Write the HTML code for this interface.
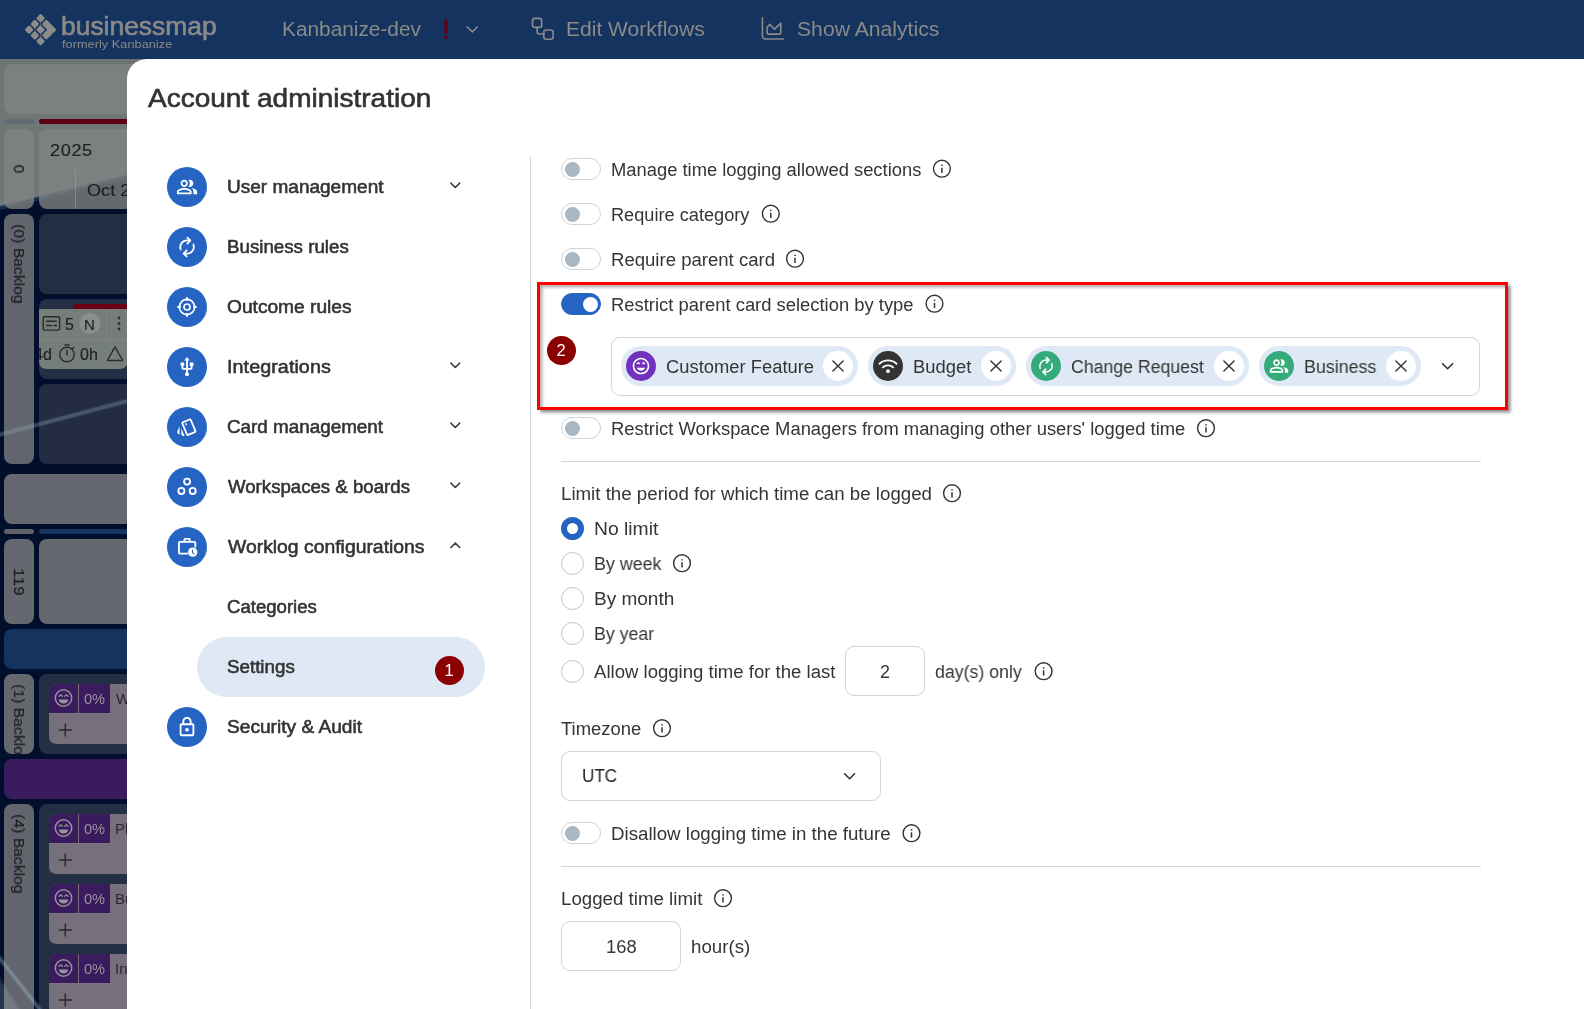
<!DOCTYPE html>
<html lang="en">
<head>
<meta charset="utf-8">
<title>Account administration</title>
<style>
html,body{margin:0;padding:0}
body{width:1584px;height:1009px;overflow:hidden;position:relative;background:#fff;font-family:"Liberation Sans",sans-serif}
.t{position:absolute;will-change:transform;white-space:nowrap;font-family:"Liberation Sans",sans-serif}
.abs{position:absolute}
#hdr{position:absolute;left:0;top:0;width:1584px;height:59px;background:#14335f}
#board{position:absolute;left:0;top:59px;width:160px;height:950px;background:#020f2c;overflow:hidden}
#modal{position:absolute;left:127px;top:59px;width:1457px;height:950px;background:#fff;border-top-left-radius:20px}
.bx{position:absolute;border-radius:8px}
.ic{position:absolute;width:40px;height:40px;border-radius:50%;background:#2664c3;left:167px}
.ic svg{position:absolute;left:9px;top:8.5px;width:22px;height:22px;fill:#fff}
.chev{position:absolute;width:12px;height:8px}
.tg{position:absolute;left:561px;width:40px;height:22px;border-radius:11px;box-sizing:border-box;border:1px solid #ccd5dc;background:#fff}
.tg i{position:absolute;left:2.6px;top:2.7px;width:15px;height:15px;border-radius:50%;background:#a8b7c1}
.tg.on{background:#2664c3;border-color:#2664c3}
.tg.on i{left:20.6px;background:#fff}
.info{position:absolute;width:20px;height:20px}
.rd{position:absolute;left:561px;width:23px;height:23px;border-radius:50%;box-sizing:border-box;border:1px solid #b9c6cf;background:#fff}
.rd.on{border:6.6px solid #2664c3}
.hr{position:absolute;left:561px;width:920px;height:1px;background:#cfd8dc}
.inp{position:absolute;box-sizing:border-box;border:1px solid #ccd5dc;border-radius:9px;background:#fff}
.chip{position:absolute;top:346px;height:40px;border-radius:20px;background:#dfe8f5}
.chip .ci{position:absolute;left:5px;top:5px;width:30px;height:30px;border-radius:50%}
.chip .ci svg{position:absolute;left:5px;top:5px;width:20px;height:20px;fill:#fff}
.chip .cx{position:absolute;right:5px;top:5px;width:30px;height:30px;border-radius:50%;background:#fff}
.chip .cx svg{position:absolute;left:9px;top:9px;width:12px;height:12px}
.badge{position:absolute;width:29.6px;height:29.6px;border-radius:50%;background:#8b0000}
</style>
</head>
<body>
<!-- ===== board behind modal ===== -->
<div id="board">
<svg class="abs" style="left:0;top:0" width="160" height="950" viewBox="0 59 160 950">
 <defs>
  <linearGradient id="gtop" x1="0" y1="59" x2="0" y2="210" gradientUnits="userSpaceOnUse"><stop offset="0" stop-color="#6b736e"/><stop offset="0.12" stop-color="#6f7774"/><stop offset="1" stop-color="#6f7775"/></linearGradient>
 </defs>
 <!-- background picture: grey-green sky over dark navy -->
 <polygon points="0,59 160,59 160,166 0,205" fill="url(#gtop)"/>
 <polygon points="0,204 160,165 160,168 0,207" fill="#8fa0a8" opacity=".5"/>
 <polygon points="0,207 160,168 160,171 0,210" fill="#1e3a52" opacity=".7"/>
 <!-- row 1 -->
 <rect x="4" y="64" width="160" height="50" rx="8" fill="#808382" opacity=".78"/>
 <rect x="4" y="119" width="30" height="5" rx="2.500" fill="#626b73"/>
 <rect x="39" y="119" width="130" height="5" rx="2.500" fill="#5a0012"/>
 <rect x="4" y="129" width="30" height="80" rx="8" fill="#808382" opacity=".78"/>
 <rect x="39" y="129" width="130" height="80" rx="8" fill="#808382" opacity=".78"/>
 <path d="M39 169.500H160" stroke="#8b8e8e" stroke-width="1" fill="none" opacity=".35"/><path d="M75.500 169.500V209" stroke="#9a9d9e" stroke-width="1" fill="none" opacity=".6"/>
 <!-- (0) backlog -->
 <rect x="4" y="214" width="30" height="250" rx="8" fill="#65686f" opacity=".97"/>
 <rect x="39" y="214" width="130" height="80" rx="8" fill="#242e44" opacity=".97"/>
 <rect x="39" y="299" width="130" height="80" rx="8" fill="#242e44"/>
 <rect x="73" y="304" width="100" height="5" rx="2.500" fill="#6a0014"/>
 <path d="M39 309H127.500V361Q127.500 369 119.500 369H47Q39 369 39 361Z" fill="#767e79"/>
 <path d="M39 339.500H160M106.500 309V339.500" stroke="#7f8680" stroke-width="1" fill="none"/>
 <circle cx="90" cy="323.500" r="10.500" fill="#8a8f8c"/>
 <g fill="none" stroke="#2b2b2b" stroke-width="1.400" stroke-linejoin="round" stroke-linecap="round">
  <rect x="43.200" y="316.700" width="16.400" height="13.400" rx="1.500"/>
  <path d="M46.600 321.300H56.400M46.600 325.500H51.500M54 325.500H56.400"/>
  <circle cx="67" cy="354.500" r="7.300"/>
  <path d="M67 350.200V354.800M64.800 345H69.200M72.600 348.600L73.800 347.400"/>
  <path d="M115 346.800L122.700 360.500H107.300Z"/>
 </g>
 <g fill="#2b2b2b"><circle cx="119" cy="318" r="1.400"/><circle cx="119" cy="323.500" r="1.400"/><circle cx="119" cy="329" r="1.400"/></g>
 <rect x="39" y="384" width="130" height="80" rx="8" fill="#242e44" opacity=".96"/>
 <!-- row -->
 <rect x="4" y="474" width="160" height="50" rx="8" fill="#65686f"/>
 <rect x="4" y="529" width="30" height="5" rx="2.500" fill="#5e6268"/>
 <rect x="39" y="529" width="130" height="5" rx="2.500" fill="#17345f"/>
 <rect x="4" y="539" width="30" height="85" rx="8" fill="#65686f"/>
 <rect x="39" y="539" width="130" height="85" rx="8" fill="#65686f"/>
 <rect x="4" y="629" width="160" height="40" rx="8" fill="#14335f"/>
 <!-- (1) backlog -->
 <rect x="4" y="674" width="30" height="80" rx="8" fill="#65686f"/>
 <rect x="39" y="674" width="130" height="80" rx="8" fill="#242e44"/>
 <rect x="4" y="759" width="160" height="40" rx="8" fill="#391b5e"/>
 <!-- (4) backlog -->
 <rect x="4" y="804" width="30" height="230" rx="8" fill="#65686f" opacity=".97"/>
 <rect x="39" y="804" width="130" height="230" rx="8" fill="#242e44"/>
 <polygon points="0,432.800 160,390.800 160,394.200 0,436.200" fill="#8fb6c8" opacity=".24" style="filter:blur(.6px)"/>
 <polygon points="0,431.500 160,389.500 160,395.500 0,437.500" fill="#9fb4c4" opacity=".1"/>
 <g style="filter:blur(1px)"><path d="M-6 951L42 1012.400" stroke="#a8c8e4" stroke-width="2.600" opacity=".5" fill="none"/><path d="M-4 972L24 1016L-4 1016Z" fill="#b8c4d0" opacity=".2"/></g>
 <g>
  <path d="M57 684H160V744H57Q49 744 49 736V692Q49 684 57 684Z" fill="#76707c"/>
  <path d="M57 684H110V713H49V692Q49 684 57 684Z" fill="#391b5e"/>
  <path d="M78.500 684V713" stroke="#76707c" stroke-width="1"/><path d="M49 713.500H160" stroke="#807a86" stroke-width="1" opacity=".5"/>
  <g fill="none" stroke="#96939b" stroke-width="1.500" stroke-linecap="round">
   <circle cx="63.500" cy="698" r="8.200"/>
   <path d="M59 696.300L60.700 694.800L62.400 696.300M64.700 696.300L66.400 694.800L68.100 696.300" stroke-width="1.200"/>
  </g>
  <path d="M58.700 699.500H68.300Q67.500 703.600 63.500 703.600Q59.500 703.600 58.700 699.500Z" fill="#96939b"/>
  <path d="M65.300 723.500V736.500M58.800 730H71.800" stroke="#2b2b2b" stroke-width="1.500" fill="none"/>
 </g>
 <g transform="translate(0 130)">
  <path d="M57 684H160V744H57Q49 744 49 736V692Q49 684 57 684Z" fill="#76707c"/>
  <path d="M57 684H110V713H49V692Q49 684 57 684Z" fill="#391b5e"/>
  <path d="M78.500 684V713" stroke="#76707c" stroke-width="1"/><path d="M49 713.500H160" stroke="#807a86" stroke-width="1" opacity=".5"/>
  <g fill="none" stroke="#96939b" stroke-width="1.500" stroke-linecap="round">
   <circle cx="63.500" cy="698" r="8.200"/>
   <path d="M59 696.300L60.700 694.800L62.400 696.300M64.700 696.300L66.400 694.800L68.100 696.300" stroke-width="1.200"/>
  </g>
  <path d="M58.700 699.500H68.300Q67.500 703.600 63.500 703.600Q59.500 703.600 58.700 699.500Z" fill="#96939b"/>
  <path d="M65.300 723.500V736.500M58.800 730H71.800" stroke="#2b2b2b" stroke-width="1.500" fill="none"/>
 </g>
 <g transform="translate(0 200)">
  <path d="M57 684H160V744H57Q49 744 49 736V692Q49 684 57 684Z" fill="#76707c"/>
  <path d="M57 684H110V713H49V692Q49 684 57 684Z" fill="#391b5e"/>
  <path d="M78.500 684V713" stroke="#76707c" stroke-width="1"/><path d="M49 713.500H160" stroke="#807a86" stroke-width="1" opacity=".5"/>
  <g fill="none" stroke="#96939b" stroke-width="1.500" stroke-linecap="round">
   <circle cx="63.500" cy="698" r="8.200"/>
   <path d="M59 696.300L60.700 694.800L62.400 696.300M64.700 696.300L66.400 694.800L68.100 696.300" stroke-width="1.200"/>
  </g>
  <path d="M58.700 699.500H68.300Q67.500 703.600 63.500 703.600Q59.500 703.600 58.700 699.500Z" fill="#96939b"/>
  <path d="M65.300 723.500V736.500M58.800 730H71.800" stroke="#2b2b2b" stroke-width="1.500" fill="none"/>
 </g>
 <g transform="translate(0 270)">
  <path d="M57 684H160V744H57Q49 744 49 736V692Q49 684 57 684Z" fill="#76707c"/>
  <path d="M57 684H110V713H49V692Q49 684 57 684Z" fill="#391b5e"/>
  <path d="M78.500 684V713" stroke="#76707c" stroke-width="1"/><path d="M49 713.500H160" stroke="#807a86" stroke-width="1" opacity=".5"/>
  <g fill="none" stroke="#96939b" stroke-width="1.500" stroke-linecap="round">
   <circle cx="63.500" cy="698" r="8.200"/>
   <path d="M59 696.300L60.700 694.800L62.400 696.300M64.700 696.300L66.400 694.800L68.100 696.300" stroke-width="1.200"/>
  </g>
  <path d="M58.700 699.500H68.300Q67.500 703.600 63.500 703.600Q59.500 703.600 58.700 699.500Z" fill="#96939b"/>
  <path d="M65.300 723.500V736.500M58.800 730H71.800" stroke="#2b2b2b" stroke-width="1.500" fill="none"/>
 </g>
</svg>

</div>
<!-- ===== header ===== -->
<div id="hdr">
<svg class="abs" style="left:0;top:0" width="1000" height="59" viewBox="0 0 1000 59">
 <g fill="#8c8b8a">
  <g id="lg">
   <rect x="-3.3" y="-3.3" width="6.6" height="6.6" rx="1.5" transform="translate(29.1 29.7) rotate(45)"/>
   <rect x="-3.3" y="-3.3" width="6.6" height="6.6" rx="1.5" transform="translate(34.85 23.95) rotate(45)"/>
   <rect x="-3.3" y="-3.3" width="6.6" height="6.6" rx="1.5" transform="translate(34.85 35.45) rotate(45)"/>
   <rect x="-3.3" y="-3.3" width="6.6" height="6.6" rx="1.5" transform="translate(40.6 18.2) rotate(45)"/>
   <rect x="-3.3" y="-3.3" width="6.6" height="6.6" rx="1.5" transform="translate(40.6 29.7) rotate(45)"/>
   <rect x="-3.3" y="-3.3" width="6.6" height="6.6" rx="1.5" transform="translate(40.6 41.2) rotate(45)"/>
   <path d="M46.3 20.6 L55 29.3 Q55.4 29.7 55 30.1 L46.3 38.8 L43.2 35.7 Q42.8 35.3 43.2 34.9 L47.6 30.5 Q48.4 29.7 47.6 28.9 L43.2 24.500 Q42.8 24.1 43.2 23.7 Z" stroke="#8c8b8a" stroke-width="1.6" stroke-linejoin="round"/>
   <path d="M40.6 20V40M34.85 26V34" stroke="#8c8b8a" stroke-width="0.8" opacity=".6"/>
  </g>
 </g>
 <g fill="none" stroke="#8c8b8a" stroke-width="1.6" stroke-linecap="round" stroke-linejoin="round">
  <path d="M467.1 26.700 L472.300 31.900 L477.500 26.700" stroke-width="1.5"/>
  <rect x="532.5" y="18.4" width="9.2" height="9" rx="2.4"/>
  <rect x="543.8" y="30" width="9.3" height="9.2" rx="2.4"/>
  <path d="M537.1 27.6 V31.8 Q537.1 34 539.3 34 H543.6"/>
  <path d="M762.4 17.8 V36 Q762.4 39 765.4 39 H783.6"/>
  <path d="M767.1 27.4 L769.8 24.4 L774.5 29.2 L780.8 23.2 V32.8 Q780.8 34.1 779.5 34.1 H768.4 Q767.1 34.1 767.1 32.8 Z"/>
 </g>
</svg>

</div>
<span class="t" id="t42" style="left:49.94px;top:140px;font-size:16.5px;line-height:21px;color:#1f1f1f;letter-spacing:0.571px;-webkit-text-stroke:0.15px #1f1f1f;transform:scaleX(1.0966);transform-origin:0 50%;">2025</span>
<span class="t" id="t43" style="left:86.55px;top:180px;font-size:16.5px;line-height:21px;color:#1f1f1f;letter-spacing:0.029px;-webkit-text-stroke:0.15px #1f1f1f;transform:scaleX(1.0959);transform-origin:0 50%;">Oct 2</span>
<span class="t" id="t44" style="left:65.29px;top:314px;font-size:16px;line-height:21px;color:#1f1f1f;-webkit-text-stroke:0.15px #1f1f1f;transform-origin:0 50%;">5</span>
<span class="t" id="t45" style="left:84.28px;top:315px;font-size:15px;line-height:20px;color:#1f1f1f;-webkit-text-stroke:0.15px #1f1f1f;transform-origin:0 50%;">N</span>
<span class="t" id="t46" style="left:33.57px;top:344px;font-size:16px;line-height:21px;color:#1f1f1f;-webkit-text-stroke:0.15px #1f1f1f;transform-origin:0 50%;clip-path:inset(0 0 0 5.6px);">4d</span>
<span class="t" id="t47" style="left:80.43px;top:344px;font-size:16px;line-height:21px;color:#1f1f1f;-webkit-text-stroke:0.15px #1f1f1f;transform-origin:0 50%;">0h</span>
<span class="t" id="t48" style="left:18.8px;top:169px;font-size:15.5px;line-height:20px;color:#1f1f1f;-webkit-text-stroke:0.25px #1f1f1f;transform:translate(-50%,-50%) rotate(90deg);">0</span>
<span class="t" id="t49" style="left:18.8px;top:264px;font-size:15px;line-height:20px;color:#1f1f1f;-webkit-text-stroke:0.2px #1f1f1f;transform:translate(-50%,-50%) rotate(90deg) scaleX(1.0483);">(0) Backlog</span>
<span class="t" id="t50" style="left:18.8px;top:582.4px;font-size:15.5px;line-height:20px;color:#1f1f1f;letter-spacing:0.246px;-webkit-text-stroke:0.25px #1f1f1f;transform:translate(-50%,-50%) rotate(90deg) scaleX(1.0976);">119</span>
<span class="t" id="t51" style="left:18.8px;top:723.6px;font-size:15px;line-height:20px;color:#1f1f1f;-webkit-text-stroke:0.2px #1f1f1f;transform:translate(-50%,-50%) rotate(90deg) scaleX(1.0483);clip-path:inset(0 8.2px 0 0);">(1) Backlog</span>
<span class="t" id="t52" style="left:18.8px;top:854.3px;font-size:15px;line-height:20px;color:#1f1f1f;-webkit-text-stroke:0.2px #1f1f1f;transform:translate(-50%,-50%) rotate(90deg) scaleX(1.0483);">(4) Backlog</span>
<span class="t" id="t53" style="left:83.98px;top:690px;font-size:14px;line-height:18px;color:#97949c;transform:scaleX(1.0409);transform-origin:0 50%;">0%</span>
<span class="t" id="t54" style="left:83.98px;top:820px;font-size:14px;line-height:18px;color:#97949c;transform:scaleX(1.0409);transform-origin:0 50%;">0%</span>
<span class="t" id="t55" style="left:83.98px;top:890px;font-size:14px;line-height:18px;color:#97949c;transform:scaleX(1.0409);transform-origin:0 50%;">0%</span>
<span class="t" id="t56" style="left:83.98px;top:960px;font-size:14px;line-height:18px;color:#97949c;transform:scaleX(1.0409);transform-origin:0 50%;">0%</span>
<span class="t" id="t57" style="left:116.36px;top:689px;font-size:15px;line-height:20px;color:#2a2630;transform-origin:0 50%;">W</span>
<span class="t" id="t58" style="left:115.35px;top:819px;font-size:15px;line-height:20px;color:#2a2630;transform-origin:0 50%;">Pl</span>
<span class="t" id="t59" style="left:115.35px;top:889px;font-size:15px;line-height:20px;color:#2a2630;transform-origin:0 50%;">Bu</span>
<span class="t" id="t60" style="left:115.19px;top:959px;font-size:15px;line-height:20px;color:#2a2630;transform-origin:0 50%;">In</span>
<!-- ===== modal ===== -->
<div id="modal"></div>
<!-- sidebar icons -->
<div class="ic" style="top:167px"><svg viewBox="0 0 24 24"><path d="M16.67 13.13C18.04 14.06 19 15.32 19 17v3h4v-3c0-2.18-3.57-3.47-6.33-3.87zM15 12c2.210 0 4-1.790 4-4s-1.790-4-4-4c-.47 0-.91.1-1.330.24C14.500 5.270 15 6.580 15 8s-.5 2.730-1.330 3.760c.42.14.86.24 1.330.24zM9 12c2.210 0 4-1.790 4-4s-1.790-4-4-4-4 1.790-4 4 1.790 4 4 4zm0-6c1.100 0 2 .9 2 2s-.9 2-2 2-2-.9-2-2 .9-2 2-2zm0 7c-2.670 0-8 1.340-8 4v3h16v-3c0-2.660-5.330-4-8-4zm6 5H3v-.99C3.200 16.290 6.300 15 9 15s5.800 1.290 6 2v1z"/></svg></div>
<div class="ic" style="top:227px"><svg viewBox="0 0 24 24"><g fill="none" stroke="#fff" stroke-width="1.9" stroke-linecap="round" stroke-linejoin="round"><path d="M5 14.800A7.400 7.400 0 0 1 12 4.900H15.300"/><path d="M12.400 1.700L15.700 4.900L12.400 8.300"/><path d="M19 9.200A7.400 7.400 0 0 1 12 19.100H8.700"/><path d="M11.600 15.700L8.300 19.100L11.600 22.300"/></g></svg></div>
<div class="ic" style="top:287px"><svg viewBox="0 0 24 24" style="fill:none;stroke:#fff;stroke-width:1.8"><circle cx="12" cy="12" r="8.300"/><circle cx="12" cy="12" r="3.300"/><path d="M12 2.300v2M12 19.700v2M2.300 12h2M19.700 12h2" stroke-width="2.200" stroke-linecap="round"/></svg></div>
<div class="ic" style="top:347px"><svg viewBox="0 0 24 24"><path d="M15 7v4h1v2h-3V5h2l-3-4-3 4h2v8H8v-2.070c.7-.37 1.200-1.080 1.200-1.930 0-1.210-.99-2.200-2.200-2.200s-2.200.99-2.200 2.200c0 .85.5 1.560 1.200 1.930V13c0 1.110.89 2 2 2h3v3.050c-.71.37-1.200 1.100-1.200 1.950 0 1.220.99 2.200 2.200 2.200s2.200-.98 2.200-2.200c0-.85-.49-1.580-1.200-1.950V15h3c1.110 0 2-.89 2-2v-2h1V7h-4z"/></svg></div>
<div class="ic" style="top:407px"><svg viewBox="0 0 24 24"><path d="M2.530 19.650l1.340.56v-9.030l-2.430 5.860c-.41 1.020.08 2.190 1.090 2.610zm19.500-3.700L17.070 3.980c-.31-.75-1.040-1.210-1.810-1.230-.26 0-.53.04-.79.150L7.100 5.950c-.75.31-1.210 1.030-1.230 1.800-.01.27.04.54.15.8l4.960 11.970c.31.760 1.050 1.220 1.830 1.230.26 0 .52-.05.77-.15l7.360-3.050c1.020-.42 1.510-1.590 1.090-2.600zm-9.200 3.800L7.870 7.790l7.350-3.040h.01l4.950 11.950-7.350 3.050zM11 10c.55 0 1-.45 1-1s-.45-1-1-1-1 .45-1 1 .45 1 1 1zM5.880 19.750c0 1.100.9 2 2 2h1.450l-3.450-8.340v6.340z"/></svg></div>
<div class="ic" style="top:467px"><svg viewBox="0 0 24 24" style="fill:none;stroke:#fff;stroke-width:2"><circle cx="12.100" cy="6.100" r="3.300"/><circle cx="5.900" cy="16.300" r="3.300"/><circle cx="18.200" cy="16.300" r="3.300"/></svg></div>
<div class="ic" style="top:527px"><svg viewBox="0 0 24 24"><path fill="none" stroke="#fff" stroke-width="2" stroke-linejoin="round" d="M13 19.200H4.400Q3.200 19.200 3.200 18V7.600Q3.200 6.400 4.400 6.400H19.900Q21.100 6.400 21.100 7.600V12.600"/><path fill="none" stroke="#fff" stroke-width="2" stroke-linejoin="round" d="M9.100 6.400V4.300Q9.100 3.100 10.300 3.100H13.900Q15.100 3.100 15.100 4.300V6.400"/><circle cx="18.200" cy="17.600" r="5.050"/><path fill="none" stroke="#2664c3" stroke-width="1.100" stroke-linecap="round" stroke-linejoin="round" d="M18 15.200V17.900L19.600 19.500"/></svg></div>
<div class="ic" style="top:707px"><svg viewBox="0 0 24 24"><path d="M18 8h-1V6c0-2.760-2.240-5-5-5S7 3.240 7 6v2H6c-1.100 0-2 .9-2 2v10c0 1.100.9 2 2 2h12c1.100 0 2-.9 2-2V10c0-1.100-.9-2-2-2zM9 6c0-1.660 1.340-3 3-3s3 1.340 3 3v2H9V6zm9 14H6V10h12v10zm-6-3c1.100 0 2-.9 2-2s-.9-2-2-2-2 .9-2 2 .9 2 2 2z"/></svg></div>
<!-- sidebar chevrons -->
<svg class="abs" style="left:440px;top:170px" width="30" height="400" viewBox="0 0 30 400" fill="none" stroke="#383838" stroke-width="1.500" stroke-linecap="round" stroke-linejoin="round">
 <path d="M10.900 13.100 L15.300 17.500 L19.700 13.100"/>
 <path d="M10.900 193.100 L15.300 197.500 L19.700 193.100"/>
 <path d="M10.900 253.100 L15.300 257.500 L19.700 253.100"/>
 <path d="M10.900 313.100 L15.300 317.500 L19.700 313.100"/>
 <path d="M10.900 377.500 L15.300 373.100 L19.700 377.500"/>
</svg>
<!-- active sidebar item -->
<div class="abs" style="left:197px;top:637px;width:288px;height:60px;border-radius:30px;background:#dfe8f5"></div>
<div class="badge" style="left:434.800px;top:655.900px"></div>
<!-- vertical divider -->
<div class="abs" style="left:530px;top:157px;width:1px;height:852px;background:#cfd8dc"></div>
<!-- toggles -->
<div class="tg" style="top:158px"><i></i></div>
<div class="tg" style="top:203px"><i></i></div>
<div class="tg" style="top:248px"><i></i></div>
<div class="tg on" style="top:293px"><i></i></div>
<div class="tg" style="top:417px"><i></i></div>
<div class="tg" style="top:822px"><i></i></div>
<!-- dividers -->
<div class="hr" style="top:461px"></div>
<div class="hr" style="top:866px"></div>
<!-- radios -->
<div class="rd on" style="top:517px"></div>
<div class="rd" style="top:552px"></div>
<div class="rd" style="top:587px"></div>
<div class="rd" style="top:622px"></div>
<div class="rd" style="top:660px"></div>
<!-- inputs -->
<div class="inp" style="left:845px;top:646px;width:80px;height:50px"></div>
<div class="inp" style="left:561px;top:751px;width:320px;height:50px"></div>
<div class="inp" style="left:561px;top:921px;width:120px;height:50px"></div>
<div class="inp" style="left:611px;top:337px;width:869px;height:59px"></div>
<!-- chips -->
<div class="chip" style="left:621px;width:237px"><div class="ci" style="background:#7232bf"><svg viewBox="0 0 24 24"><path d="M11.990 2C6.470 2 2 6.470 2 12s4.470 10 9.990 10S22 17.530 22 12 17.520 2 11.990 2zM12 20c-4.420 0-8-3.580-8-8s3.580-8 8-8 8 3.580 8 8-3.580 8-8 8zm1-10.940L14.060 10.120 15.120 9.060 16.180 10.120 17.240 9.060 15.120 6.940 13 9.060zm-4.120 0L9.940 10.120 11 9.060 8.880 6.940 6.760 9.060 7.820 10.120 8.880 9.060zM12 17.500c2.330 0 4.310-1.460 5.110-3.500H6.890c.8 2.040 2.780 3.500 5.110 3.500z"/></svg></div><div class="cx"><svg viewBox="0 0 12 12" fill="none" stroke="#333" stroke-width="1.400" stroke-linecap="round"><path d="M0.900 0.900L11.100 11.100M11.100 0.900L0.900 11.100"/></svg></div></div>
<div class="chip" style="left:868px;width:148px"><div class="ci" style="background:#333"><svg viewBox="0 0 24 24" style="fill:none;stroke:#fff;stroke-width:2.100;stroke-linecap:round"><path d="M1.700 9.300C7.400 3.900 16.600 3.900 22.300 9.300"/><path d="M5.700 13.600C9.200 10.300 14.800 10.300 18.300 13.600"/><circle cx="12" cy="18.200" r="2.300" fill="#fff" stroke="none"/></svg></div><div class="cx"><svg viewBox="0 0 12 12" fill="none" stroke="#333" stroke-width="1.400" stroke-linecap="round"><path d="M0.900 0.900L11.100 11.100M11.100 0.900L0.900 11.100"/></svg></div></div>
<div class="chip" style="left:1026px;width:223px"><div class="ci" style="background:#35aa7b"><svg viewBox="0 0 24 24"><g fill="none" stroke="#fff" stroke-width="1.9" stroke-linecap="round" stroke-linejoin="round"><path d="M5 14.800A7.400 7.400 0 0 1 12 4.900H15.300"/><path d="M12.400 1.700L15.700 4.900L12.400 8.300"/><path d="M19 9.200A7.400 7.400 0 0 1 12 19.100H8.700"/><path d="M11.600 15.700L8.300 19.100L11.600 22.300"/></g></svg></div><div class="cx"><svg viewBox="0 0 12 12" fill="none" stroke="#333" stroke-width="1.400" stroke-linecap="round"><path d="M0.900 0.900L11.100 11.100M11.100 0.900L0.900 11.100"/></svg></div></div>
<div class="chip" style="left:1259px;width:162px"><div class="ci" style="background:#35aa7b"><svg viewBox="0 0 24 24"><path d="M16.670 13.130C18.040 14.060 19 15.320 19 17v3h4v-3c0-2.180-3.570-3.470-6.330-3.870zM15 12c2.210 0 4-1.790 4-4s-1.790-4-4-4c-.47 0-.91.1-1.330.24C14.500 5.270 15 6.580 15 8s-.5 2.730-1.330 3.760c.42.14.86.24 1.330.24zM9 12c2.210 0 4-1.790 4-4s-1.790-4-4-4-4 1.790-4 4 1.790 4 4 4zm0-6c1.100 0 2 .9 2 2s-.9 2-2 2-2-.9-2-2 .9-2 2-2zm0 7c-2.670 0-8 1.340-8 4v3h16v-3c0-2.660-5.330-4-8-4zm6 5H3v-.99C3.200 16.290 6.300 15 9 15s5.800 1.290 6 2v1z"/></svg></div><div class="cx"><svg viewBox="0 0 12 12" fill="none" stroke="#333" stroke-width="1.400" stroke-linecap="round"><path d="M0.900 0.900L11.100 11.100M11.100 0.900L0.900 11.100"/></svg></div></div>
<!-- select chevrons -->
<svg class="abs" style="left:1437px;top:358px" width="22" height="16" viewBox="0 0 22 16" fill="none" stroke="#333" stroke-width="1.600" stroke-linecap="round" stroke-linejoin="round"><path d="M5.600 5.800 L10.600 10.800 L15.600 5.800"/></svg>
<svg class="abs" style="left:839px;top:768px" width="22" height="16" viewBox="0 0 22 16" fill="none" stroke="#333" stroke-width="1.600" stroke-linecap="round" stroke-linejoin="round"><path d="M5.600 5.800 L10.600 10.800 L15.600 5.800"/></svg>
<!-- annotation -->
<div class="abs" style="left:537px;top:282px;width:971px;height:128px;box-sizing:border-box;border:3px solid #fd0000;box-shadow:2.500px 2.500px 3px rgba(0,0,0,.45), inset 2.500px 2.500px 3px rgba(0,0,0,.3)"></div>
<div class="badge" style="left:546.800px;top:335.900px"></div>
<svg class="abs" style="left:0;top:0;pointer-events:none" width="1584" height="1009" viewBox="0 0 1584 1009" fill="none" stroke="#333" stroke-width="1.4">
<circle cx="941.9" cy="168.7" r="8.4"/><path d="M941.9 167.8V173.1" stroke-width="1.5"/><path d="M941.9 164.7V166.1" stroke-width="1.6"/>
<circle cx="770.8" cy="213.7" r="8.4"/><path d="M770.8 212.8V218.1" stroke-width="1.5"/><path d="M770.8 209.7V211.1" stroke-width="1.6"/>
<circle cx="795" cy="258.7" r="8.4"/><path d="M795 257.8V263.1" stroke-width="1.5"/><path d="M795 254.7V256.1" stroke-width="1.6"/>
<circle cx="934.5" cy="303.7" r="8.4"/><path d="M934.5 302.8V308.1" stroke-width="1.5"/><path d="M934.5 299.7V301.1" stroke-width="1.6"/>
<circle cx="1206" cy="428.2" r="8.4"/><path d="M1206 427.3V432.6" stroke-width="1.5"/><path d="M1206 424.2V425.6" stroke-width="1.6"/>
<circle cx="952" cy="493.2" r="8.4"/><path d="M952 492.3V497.6" stroke-width="1.5"/><path d="M952 489.2V490.6" stroke-width="1.6"/>
<circle cx="682" cy="563.2" r="8.4"/><path d="M682 562.3V567.6" stroke-width="1.5"/><path d="M682 559.2V560.6" stroke-width="1.6"/>
<circle cx="1043.6" cy="671.2" r="8.4"/><path d="M1043.6 670.3V675.6" stroke-width="1.5"/><path d="M1043.6 667.2V668.6" stroke-width="1.6"/>
<circle cx="662" cy="728.2" r="8.4"/><path d="M662 727.3V732.6" stroke-width="1.5"/><path d="M662 724.2V725.6" stroke-width="1.6"/>
<circle cx="911.5" cy="833.2" r="8.4"/><path d="M911.5 832.3V837.6" stroke-width="1.5"/><path d="M911.5 829.2V830.6" stroke-width="1.6"/>
<circle cx="723" cy="898.2" r="8.4"/><path d="M723 897.3V902.6" stroke-width="1.5"/><path d="M723 894.2V895.6" stroke-width="1.6"/>
</svg>

<span class="t" id="t0" style="left:611.08px;top:159px;font-size:18px;line-height:23px;color:#353535;transform:scaleX(1.0202);transform-origin:0 50%;">Manage time logging allowed sections</span>
<span class="t" id="t1" style="left:611.29px;top:204px;font-size:18px;line-height:23px;color:#353535;transform:scaleX(1.0096);transform-origin:0 50%;">Require category</span>
<span class="t" id="t2" style="left:611.27px;top:249px;font-size:18px;line-height:23px;color:#353535;transform:scaleX(1.0311);transform-origin:0 50%;">Require parent card</span>
<span class="t" id="t3" style="left:611.27px;top:294px;font-size:18px;line-height:23px;color:#353535;transform:scaleX(1.0217);transform-origin:0 50%;">Restrict parent card selection by type</span>
<span class="t" id="t4" style="left:611.27px;top:418px;font-size:18px;line-height:23px;color:#353535;transform:scaleX(1.0212);transform-origin:0 50%;">Restrict Workspace Managers from managing other users' logged time</span>
<span class="t" id="t5" style="left:561.05px;top:483px;font-size:18px;line-height:23px;color:#353535;transform:scaleX(1.0386);transform-origin:0 50%;">Limit the period for which time can be logged</span>
<span class="t" id="t6" style="left:593.6px;top:518px;font-size:18px;line-height:23px;color:#353535;transform:scaleX(1.0724);transform-origin:0 50%;">No limit</span>
<span class="t" id="t7" style="left:593.71px;top:553px;font-size:18px;line-height:23px;color:#353535;transform:scaleX(0.9916);transform-origin:0 50%;">By week</span>
<span class="t" id="t8" style="left:593.62px;top:588px;font-size:18px;line-height:23px;color:#353535;transform:scaleX(1.0559);transform-origin:0 50%;">By month</span>
<span class="t" id="t9" style="left:593.71px;top:623px;font-size:18px;line-height:23px;color:#353535;transform:scaleX(0.9857);transform-origin:0 50%;">By year</span>
<span class="t" id="t10" style="left:593.95px;top:661px;font-size:18px;line-height:23px;color:#353535;transform:scaleX(1.0312);transform-origin:0 50%;">Allow logging time for the last</span>
<span class="t" id="t11" style="left:935.2px;top:661px;font-size:18px;line-height:23px;color:#353535;transform:scaleX(0.9855);transform-origin:0 50%;">day(s) only</span>
<span class="t" id="t12" style="left:561.27px;top:718px;font-size:18px;line-height:23px;color:#353535;transform:scaleX(1.0236);transform-origin:0 50%;">Timezone</span>
<span class="t" id="t13" style="left:582.04px;top:765px;font-size:17.5px;line-height:23px;color:#222;transform:scaleX(0.9755);transform-origin:0 50%;">UTC</span>
<span class="t" id="t14" style="left:611.25px;top:823px;font-size:18px;line-height:23px;color:#353535;transform:scaleX(1.0387);transform-origin:0 50%;">Disallow logging time in the future</span>
<span class="t" id="t15" style="left:561.06px;top:888px;font-size:18px;line-height:23px;color:#353535;transform:scaleX(1.0387);transform-origin:0 50%;">Logged time limit</span>
<span class="t" id="t16" style="left:690.68px;top:936px;font-size:18px;line-height:23px;color:#353535;transform:scaleX(1.0388);transform-origin:0 50%;">hour(s)</span>
<span class="t" id="t17" style="left:885px;top:661px;font-size:18px;line-height:23px;color:#353535;transform:translateX(-50%);">2</span>
<span class="t" id="t18" style="left:605.98px;top:936px;font-size:18px;line-height:23px;color:#353535;transform:scaleX(1.0205);transform-origin:0 50%;">168</span>
<span class="t" id="t19" style="left:665.7px;top:356px;font-size:18px;line-height:23px;color:#353535;transform:scaleX(1.0209);transform-origin:0 50%;">Customer Feature</span>
<span class="t" id="t20" style="left:913.07px;top:356px;font-size:18px;line-height:23px;color:#353535;transform:scaleX(1.0208);transform-origin:0 50%;">Budget</span>
<span class="t" id="t21" style="left:1071.4px;top:356px;font-size:18px;line-height:23px;color:#353535;transform:scaleX(0.9836);transform-origin:0 50%;">Change Request</span>
<span class="t" id="t22" style="left:1304.31px;top:356px;font-size:18px;line-height:23px;color:#353535;transform:scaleX(0.9912);transform-origin:0 50%;">Business</span>
<span class="t" id="t23" style="left:560.9px;top:340px;font-size:16.5px;line-height:21px;color:#fff;transform:translateX(-50%);">2</span>
<span class="t" id="t24" style="left:448.9px;top:660px;font-size:16.5px;line-height:21px;color:#fff;transform:translateX(-50%);">1</span>
<span class="t" id="t25" style="left:226.82px;top:176px;font-size:18px;line-height:23px;color:#333;-webkit-text-stroke:0.55px #333;transform:scaleX(1.0569);transform-origin:0 50%;">User management</span>
<span class="t" id="t26" style="left:226.78px;top:236px;font-size:18px;line-height:23px;color:#333;-webkit-text-stroke:0.55px #333;transform:scaleX(1.0403);transform-origin:0 50%;">Business rules</span>
<span class="t" id="t27" style="left:227.39px;top:296px;font-size:18px;line-height:23px;color:#333;-webkit-text-stroke:0.55px #333;transform:scaleX(1.0644);transform-origin:0 50%;">Outcome rules</span>
<span class="t" id="t28" style="left:226.57px;top:356px;font-size:18px;line-height:23px;color:#333;letter-spacing:0.050px;-webkit-text-stroke:0.55px #333;transform:scaleX(1.0974);transform-origin:0 50%;">Integrations</span>
<span class="t" id="t29" style="left:227.31px;top:416px;font-size:18px;line-height:23px;color:#333;-webkit-text-stroke:0.55px #333;transform:scaleX(1.0468);transform-origin:0 50%;">Card management</span>
<span class="t" id="t30" style="left:227.91px;top:476px;font-size:18px;line-height:23px;color:#333;-webkit-text-stroke:0.55px #333;transform:scaleX(1.0353);transform-origin:0 50%;">Workspaces &amp; boards</span>
<span class="t" id="t31" style="left:227.91px;top:536px;font-size:18px;line-height:23px;color:#333;-webkit-text-stroke:0.55px #333;transform:scaleX(1.0753);transform-origin:0 50%;">Worklog configurations</span>
<span class="t" id="t32" style="left:227.33px;top:596px;font-size:18px;line-height:23px;color:#333;-webkit-text-stroke:0.55px #333;transform:scaleX(1.0323);transform-origin:0 50%;">Categories</span>
<span class="t" id="t33" style="left:227.25px;top:656px;font-size:18px;line-height:23px;color:#333;-webkit-text-stroke:0.55px #333;transform:scaleX(1.0423);transform-origin:0 50%;">Settings</span>
<span class="t" id="t34" style="left:227.24px;top:716px;font-size:18px;line-height:23px;color:#333;-webkit-text-stroke:0.55px #333;transform:scaleX(1.0629);transform-origin:0 50%;">Security &amp; Audit</span>
<span class="t" id="t35" style="left:147.61px;top:81px;font-size:26px;line-height:34px;color:#333;-webkit-text-stroke:0.6px #333;transform:scaleX(1.0772);transform-origin:0 50%;">Account administration</span>
<span class="t" id="t36" style="left:60.68px;top:9px;font-size:26px;line-height:34px;color:#8b8a89;-webkit-text-stroke:0.6px #8b8a89;transform:scaleX(1.0163);transform-origin:0 50%;">businessmap</span>
<span class="t" id="t37" style="left:61.61px;top:37px;font-size:11.5px;line-height:15px;color:#8b8a89;letter-spacing:0.064px;transform:scaleX(1.1000);transform-origin:0 50%;">formerly Kanbanize</span>
<span class="t" id="t38" style="left:281.99px;top:16px;font-size:20px;line-height:26px;color:#8b8a89;transform:scaleX(1.0411);transform-origin:0 50%;">Kanbanize-dev</span>
<span class="t" id="t39" style="left:565.67px;top:16px;font-size:20px;line-height:26px;color:#8b8a89;transform:scaleX(1.0521);transform-origin:0 50%;">Edit Workflows</span>
<span class="t" id="t40" style="left:796.56px;top:16px;font-size:20px;line-height:26px;color:#8b8a89;transform:scaleX(1.0578);transform-origin:0 50%;">Show Analytics</span>
<span class="t" id="t41" style="left:445.9px;top:11px;font-size:28.5px;line-height:37px;color:#620010;-webkit-text-stroke:0.5px #620010;transform:translateX(-50%);">!</span>
</body>
</html>
